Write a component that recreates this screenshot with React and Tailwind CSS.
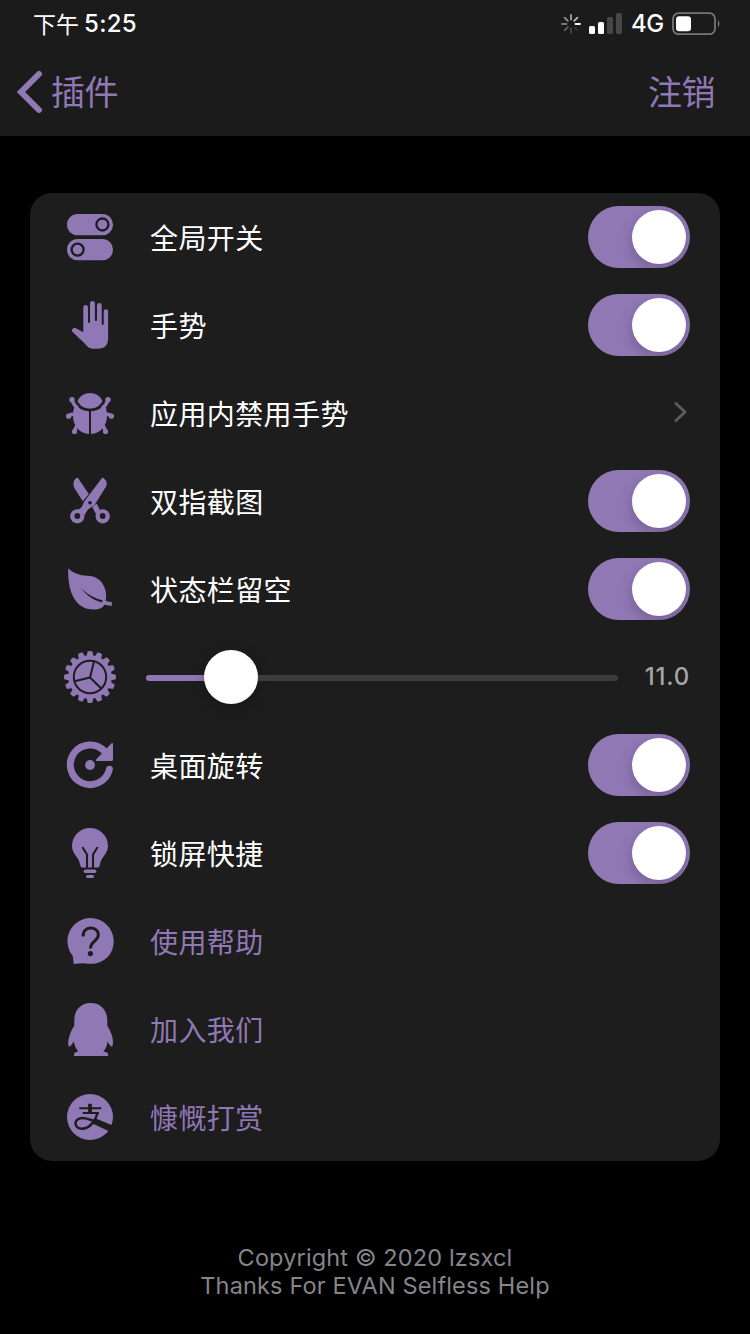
const BG = '#1d1d1d';

function Icon({ children }) {
  return (
    <svg viewBox="0 0 60 60" className="size-15 shrink-0" fill="#9078b5">
      {children}
    </svg>
  );
}

const Toggles = () => (
  <Icon>
    <rect x="7" y="7" width="46" height="21.3" rx="10.6" />
    <rect x="7" y="32" width="46" height="21.3" rx="10.6" />
    <g fill="none" stroke={BG} strokeWidth="2.3">
      <circle cx="42.4" cy="17.5" r="6" />
      <circle cx="17.6" cy="42.6" r="6" />
    </g>
  </Icon>
);

const Hand = () => (
  <Icon>
    <path d="M23.3 37.3V12.4a2.35 2.35 0 0 1 4.7 0V27a1 1 0 0 0 2 0V8.4a2.45 2.45 0 0 1 4.9 0V25a1.05 1.05 0 0 0 2.1 0V10.4a2.35 2.35 0 0 1 4.7 0V29a1 1 0 0 0 2 0V16.4a2.2 2.2 0 0 1 4.4 0V43.5Q48.1 53.700 38.500 53.700H32.500Q28.500 53.700 25 48.800L12.600 37C11 35 12.800 32.600 15.600 33.200Q17 33.600 18.200 34.600Z" />
  </Icon>
);

const Bug = () => (
  <Icon>
    <g fill="none" stroke="#9078b5" strokeWidth="3.400">
      <path d="M12 16.500Q13.500 22.500 18 25M48 16.500Q46.500 22.500 42 25M8 33Q11 31 15 31M52 33Q49 31 45 31M14.500 48.500Q15.500 43.500 19 41M45.500 48.500Q44.500 43.500 41 41" />
    </g>
    <circle cx="12" cy="16.700" r="2.700" />
    <circle cx="48" cy="16.700" r="2.700" />
    <circle cx="8.600" cy="33.200" r="2.600" />
    <circle cx="51.400" cy="33.200" r="2.600" />
    <circle cx="14.500" cy="48.500" r="2.600" />
    <circle cx="45.500" cy="48.500" r="2.600" />
    <path d="M15.600 21C18.500 25.500 23 27.900 29 28.200V51C19 50.500 13 42.500 13 32.500C13 28 14 24 15.600 21Z" />
    <path d="M44.400 21C41.500 25.500 37 27.900 31 28.200V51C41 50.500 47 42.500 47 32.500C47 28 46 24 44.400 21Z" />
    <path d="M17.500 18C20 12.800 24.500 10 30 10S40 12.800 42.500 18C40 23.200 35.500 25.500 30 25.500S20 23.200 17.500 18Z" />
  </Icon>
);

const Scissors = () => (
  <Icon>
    <path d="M16.200 7C13 10 12.700 13.500 14.600 17.400L22.800 30.300L28.800 23L18.300 7.600Q17.300 6.400 16.200 7Z" />
    <path d="M32.200 36L36.700 32.500L39.700 38.500L36 43Z" />
    <path d="M43.600 7Q47.200 10 46.700 13Q46.500 15.500 44.500 18L34.500 34Q30.500 36.500 28 38.500Q26 41 24 45L18 38.500Q21.500 37.600 23 33.500Q23.600 30.800 26.500 27.500L41.600 7.600Q42.600 6.400 43.600 7Z" />
    <circle cx="17.300" cy="45.300" r="7.100" />
    <circle cx="42.700" cy="45.300" r="7.100" />
    <g fill={BG}>
      <circle cx="17.300" cy="45" r="2.900" />
      <circle cx="42.700" cy="45" r="2.900" />
      <circle cx="30" cy="31.700" r="1.800" />
    </g>
  </Icon>
);

const Leaf = () => (
  <Icon>
    <path d="M8.300 9.300C16 17.500 26 16.200 33 17.500C43 20.500 47.700 31.500 45.700 41.900L52 43.200L51.700 47L44.300 45.800C42.500 49.500 38.500 50.500 33.500 50.500C15.500 50.500 7.300 33 8.300 9.300Z" />
    <path d="M21 29.300Q31 39 42.700 41.200L41.700 43.600Q29.500 40.500 21 29.300Z" fill={BG} />
  </Icon>
);

const TEETH = Array.from({ length: 16 }, (_, i) => i * 22.5);

const Gear = () => (
  <Icon>
    <circle cx="30" cy="30" r="21.700" />
    {TEETH.map((a) => (
      <path key={a} d="M26.500 9.500L27.700 4.200Q30 3.800 32.300 4.200L33.500 9.500Z" transform={`rotate(${a} 30 30)`} />
    ))}
    <g fill="none" stroke={BG} strokeWidth="2">
      <circle cx="30" cy="30" r="16.200" />
      <path d="M30 30.500L33.900 15M30 30.500L14.500 34.200M30 30.500L41 41.200" />
    </g>
  </Icon>
);

const Rotate = () => (
  <Icon>
    <path d="M49.400 34.200A19.800 19.800 0 1 1 44.500 16.200" fill="none" stroke="#9078b5" strokeWidth="6.900" strokeLinecap="round" />
    <path d="M51.200 8.500Q53 7.200 53 9V24.700Q53 26 51.700 26H37.300Q34.800 26 36.400 24.200Z" />
    <circle cx="30" cy="30" r="4.900" />
  </Icon>
);

const Bulb = () => (
  <Icon>
    <path d="M30 5A18 18 0 0 1 48 23C48 31 41.500 33 39.700 42Q39.500 44.500 38 44.500H22Q20.500 44.500 20.300 42C18.500 33 12 31 12 23A18 18 0 0 1 30 5Z" />
    <path d="M22.800 24.800L27 31.500V45M37.200 24.800L33 31.500V45" fill="none" stroke={BG} strokeWidth="2.100" strokeLinecap="round" />
    <rect x="23.700" y="46.600" width="12.600" height="3.400" rx="1.700" />
    <rect x="26" y="52" width="8" height="3" rx="1.500" />
  </Icon>
);

const Help = () => (
  <Icon>
    <path d="M30.300 7A23.200 23.200 0 0 1 53.700 30C53.700 45 42 54 28 52.700Q23 51.700 13.700 53L12.800 45A23.200 23.200 0 0 1 30.300 7Z" />
    <path d="M23.100 25.500C22.300 14.500 38.400 14.500 38.300 24C38.200 30.500 30.400 30 30.400 37.500" fill="none" stroke={BG} strokeWidth="2.900" />
    <circle cx="30.400" cy="42.600" r="2.600" fill={BG} />
  </Icon>
);

const Penguin = () => (
  <Icon>
    <path d="M30.700 4C41 4 47 11 47.300 21V26.500Q53 36 53 43.500Q52.800 47.600 51.700 47.700Q50 47 47.600 42.600Q47 48.500 43.400 52.500Q48 53.300 48 55V57H14V55Q14 53.500 18.200 52.500Q14.600 48.500 13.600 42.600Q11 47.500 9 47.800Q7.800 46 8.300 42Q9.500 34 14.300 26.500V21C14.500 11 20.500 4 30.700 4Z" />
  </Icon>
);

const Alipay = () => (
  <Icon>
    <circle cx="30" cy="30" r="23" />
    <g fill="none" stroke={BG}>
      <path d="M19.300 21.300H41.200M22.700 26H39" strokeWidth="1.900" />
      <path d="M30 16.800V26" strokeWidth="3.800" />
      <path d="M37.600 26C36 32 30.500 41.800 22 41.800C14 41.800 13.200 32.500 20.800 31.200C26.500 30.400 32 33.500 38 36" strokeWidth="2.500" />
    </g>
    <path d="M36.500 31.800L54 39L49.500 44.500L32.500 36.500Z" fill={BG} />
  </Icon>
);

function Switch() {
  return (
    <div className="flex h-[62px] w-[102px] shrink-0 items-center justify-end overflow-hidden rounded-full bg-[#9078b5] p-1">
      <div className="size-[54px] rounded-full bg-white shadow-[0_5px_14px_rgba(0,0,0,0.2)]" />
    </div>
  );
}

function Chevron() {
  return (
    <svg viewBox="0 0 16 24" className="mr-0.5 mb-0.5 h-6 w-4" fill="none" stroke="#5c5c60" strokeWidth="3" strokeLinecap="round" strokeLinejoin="round">
      <path d="M4 3.500L13 12L4 20.500" />
    </svg>
  );
}

function Row({ icon, label, link, children }) {
  return (
    <div className="flex h-[88px] items-center px-[30px]">
      {icon}
      <span className={`ml-[30px] flex-1 text-[28px] leading-10 tracking-[0.4px] ${link ? 'text-[#9078b5]' : 'text-white'}`}>
        {label}
      </span>
      {children}
    </div>
  );
}

function SliderRow() {
  return (
    <div className="flex h-[88px] items-center px-[30px]">
      <Gear />
      <div className="ml-[26px] flex w-[472px] items-center">
        <div className="mt-0.5 h-1.5 w-[60px] rounded-l-full bg-[#9078b5]" />
        <div className="-ml-0.5 size-[54px] shrink-0 rounded-full bg-white shadow-[0_4px_14px_rgba(0,0,0,0.28)]" />
        <div className="mt-0.5 h-1.5 flex-1 rounded-r-full bg-[#3c3c3e]" />
      </div>
      <span className="ml-auto font-[Inter] text-[24px] leading-8 font-medium tracking-[0.8px] text-[#a5a5a5]">11.0</span>
    </div>
  );
}

const SPOKES = ['#a5a5a5', '#b9b9b9', '#ffffff', '#303030', '#484848', '#606060', '#787878', '#909090'];

function StatusBar() {
  return (
    <div className="flex h-12 items-center pr-[30px] pl-[33px] text-white">
      <span className="-mt-0.5 text-[23px] leading-8">下午</span>
      <span className="ml-[5px] font-[Inter] text-[24px] leading-8 font-medium tracking-[0.3px]">5:25</span>
      <svg viewBox="0 0 22 22" className="ml-auto size-[22px]" strokeWidth="1.800" strokeLinecap="round">
        {SPOKES.map((c, i) => (
          <path key={i} d="M11 2V6.500" stroke={c} transform={`rotate(${i * 45} 11 11)`} />
        ))}
      </svg>
      <div className="mb-0.5 ml-[7px] flex h-[21px] items-end gap-[3px]">
        <div className="h-2 w-1.5 rounded-[1.5px] bg-white" />
        <div className="h-3 w-1.5 rounded-[1.5px] bg-white" />
        <div className="h-[17px] w-1.5 rounded-[1.5px] bg-[#474747]" />
        <div className="h-[21px] w-1.5 rounded-[1.5px] bg-[#474747]" />
      </div>
      <span className="ml-[9px] w-[33px] font-[Inter] text-[24px] leading-8 font-medium tracking-[-0.5px]">4G</span>
      <svg viewBox="0 0 48 24" className="ml-2 h-6 w-12">
        <rect x="1" y="1.200" width="42" height="21" rx="5.500" fill="none" stroke="#777" strokeWidth="1.800" />
        <rect x="4" y="4.200" width="15" height="15" rx="3.200" fill="white" />
        <path d="M46 8Q49 11.700 46 15.400Z" fill="#777" />
      </svg>
    </div>
  );
}

export default function App() {
  return (
    <div className="flex h-[1334px] w-[750px] flex-col bg-black font-['Noto_Sans_CJK_SC',sans-serif] font-normal">
      <header className="h-[136px] bg-[#1b1b1b]">
        <StatusBar />
        <nav className="flex h-[88px] items-center justify-between pr-[35px] pl-4 text-[34px] leading-[48px] tracking-[-0.5px] text-[#9078b5]">
          <div className="flex items-center">
            <svg viewBox="0 0 28 44" className="h-11 w-7" fill="none" stroke="#9078b5" strokeWidth="6" strokeLinecap="round" strokeLinejoin="miter">
              <path d="M23 4L5 22L23 40" />
            </svg>
            <span className="-mt-0.5 ml-[7px]">插件</span>
          </div>
          <span className="-mt-0.5">注销</span>
        </nav>
      </header>
      <main className="mx-[30px] mt-[57px] rounded-[22px] bg-[#1d1d1d]">
        <Row icon={<Toggles />} label="全局开关"><Switch /></Row>
        <Row icon={<Hand />} label="手势"><Switch /></Row>
        <Row icon={<Bug />} label="应用内禁用手势"><Chevron /></Row>
        <Row icon={<Scissors />} label="双指截图"><Switch /></Row>
        <Row icon={<Leaf />} label="状态栏留空"><Switch /></Row>
        <SliderRow />
        <Row icon={<Rotate />} label="桌面旋转"><Switch /></Row>
        <Row icon={<Bulb />} label="锁屏快捷"><Switch /></Row>
        <Row icon={<Help />} label="使用帮助" link />
        <Row icon={<Penguin />} label="加入我们" link />
        <Row icon={<Alipay />} label="慷慨打赏" link />
      </main>
      <footer className="mt-[83px] text-center font-[Inter] text-[23.5px] leading-7 font-normal tracking-[0.15px] text-[#85858a]">
        <p>Copyright © 2020 lzsxcl</p>
        <p>Thanks For EVAN Selfless Help</p>
      </footer>
    </div>
  );
}
